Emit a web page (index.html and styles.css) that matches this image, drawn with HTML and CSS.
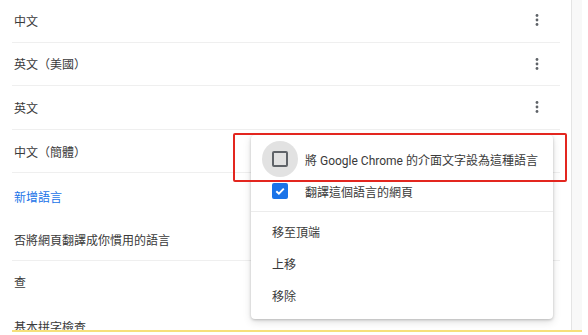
FILE: index.html
```html
<!DOCTYPE html>
<html lang="zh-Hant">
<head>
<meta charset="utf-8">
<link rel="stylesheet" href="styles.css">
</head>
<body>
<div class="page">
  <div class="top">
    <div class="main">
      <div class="list">
        <div class="row lang"><span>中文</span><button class="kebab"><svg width="4" height="14" viewBox="0 0 4 14"><circle cx="2" cy="2.5" r="1.4"/><circle cx="2" cy="7" r="1.4"/><circle cx="2" cy="11.5" r="1.4"/></svg></button></div>
        <div class="row lang"><span>英文（美國）</span><button class="kebab"><svg width="4" height="14" viewBox="0 0 4 14"><circle cx="2" cy="2.5" r="1.4"/><circle cx="2" cy="7" r="1.4"/><circle cx="2" cy="11.5" r="1.4"/></svg></button></div>
        <div class="row lang"><span>英文</span><button class="kebab"><svg width="4" height="14" viewBox="0 0 4 14"><circle cx="2" cy="2.5" r="1.4"/><circle cx="2" cy="7" r="1.4"/><circle cx="2" cy="11.5" r="1.4"/></svg></button></div>
        <div class="row lang"><span>中文（簡體）</span></div>
        <div class="row add"><span class="link">新增語言</span></div>
        <div class="row offer"><span>否將網頁翻譯成你慣用的語言</span></div>
        <div class="row heading"><span>查</span></div>
        <div class="row spell"><span>基本拼字檢查</span></div>
      </div>
    </div>
    <div class="scroll"></div>
  </div>
  <div class="yellow"></div>
</div>

<div class="menu">
  <div class="item check-item">
    <span class="ripple"><span class="box"></span></span>
    <span>將 Google Chrome 的介面文字設為這種語言</span>
  </div>
  <div class="item check-item">
    <span class="box checked"><svg width="12" height="12" viewBox="0 0 12 12"><path d="M2.3 6.2 L4.9 8.7 L9.8 3.6" fill="none" stroke="#fff" stroke-width="1.9"/></svg></span>
    <span>翻譯這個語言的網頁</span>
  </div>
  <div class="sep"></div>
  <div class="item">移至頂端</div>
  <div class="item">上移</div>
  <div class="item">移除</div>
</div>
<div class="highlight"></div>
</body>
</html>
```

FILE: styles.css
```css
html, body {
  margin: 0;
  padding: 0;
  background: #fff;
  width: 588px;
  height: 335px;
  overflow: hidden;
  font-family: Roboto, "Noto Sans CJK TC", sans-serif;
  font-size: 12px;
  color: #3a3a3a;
}

.page {
  display: flex;
  flex-direction: column;
}

.top {
  display: flex;
  height: 330px;
}

.main {
  width: 571px;
  box-sizing: border-box;
  padding: 0 11px 0 12px;
  overflow: hidden;
}

.list {
  margin-top: -1px;
}

.row {
  display: flex;
  align-items: center;
  justify-content: space-between;
  box-sizing: border-box;
  padding: 0 11px 0 2px;
}

.lang {
  height: 43.6px;
  border-bottom: 1px solid #efefef;
}

.add {
  height: 46px;
}

.link {
  color: #1a73e8;
}

.offer {
  height: 42px;
  border-bottom: 1px solid #efefef;
}

.heading {
  height: 41px;
}

.spell {
  height: 48px;
}

.kebab {
  border: 0;
  background: none;
  padding: 0;
  width: 24px;
  height: 24px;
  display: flex;
  align-items: center;
  justify-content: center;
  fill: #5f6368;
}

.scroll {
  width: 10px;
  border-left: 1px solid #e4e4e4;
  background: #f8f8f8;
}

.yellow {
  margin-left: 12px;
  width: 570px;
  height: 2px;
  background: #f6e07a;
}

.menu {
  position: absolute;
  left: 251px;
  top: 135px;
  width: 302px;
  box-sizing: border-box;
  padding: 8px 0;
  background: #fff;
  border-radius: 4px;
  box-shadow: 0 1px 3px rgba(0,0,0,0.22), 0 3px 8px rgba(0,0,0,0.12);
}

.item {
  height: 32px;
  display: flex;
  align-items: center;
  padding-left: 21px;
  color: #3a3a3a;
}

.check-item {
  gap: 17px;
}

.ripple {
  width: 16px;
  height: 16px;
  position: relative;
  display: flex;
  align-items: center;
  justify-content: center;
}

.ripple::before {
  content: "";
  position: absolute;
  left: -10px;
  top: -10px;
  width: 36px;
  height: 36px;
  border-radius: 50%;
  background: #e2e2e2;
}

.box {
  position: relative;
  width: 16px;
  height: 16px;
  box-sizing: border-box;
  border: 2px solid #5f6368;
  border-radius: 2px;
  display: flex;
  align-items: center;
  justify-content: center;
  flex: none;
}

.box.checked {
  border: 0;
  background: #1a73e8;
}

.sep {
  height: 1px;
  background: #ececec;
  margin: 4px 0 3px;
}

.highlight {
  position: absolute;
  left: 233px;
  top: 133px;
  width: 334px;
  height: 49px;
  box-sizing: border-box;
  border: 2px solid #e3261f;
  border-radius: 2px;
}
```
